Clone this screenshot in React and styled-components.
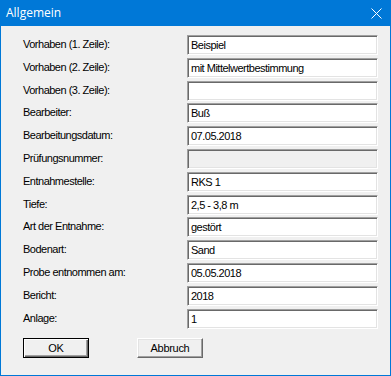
import React from 'react';
import styled, { createGlobalStyle } from 'styled-components';

const GlobalStyle = createGlobalStyle`
  html, body {
    margin: 0;
    padding: 0;
    background: #ffffff;
  }
`;

const uiFont = `'Liberation Sans', Arial, sans-serif`;

const StyledWindow = styled.div`
  width: 391px;
  height: 376px;
  box-sizing: border-box;
  border: 1px solid #0078d7;
  border-top: none;
  background: #f0f0f0;
  display: flex;
  flex-direction: column;
  font-family: ${uiFont};
  font-size: 11px;
  letter-spacing: -0.5px;
  color: #000;
`;

const StyledTitleBar = styled.div`
  height: 26px;
  margin: 0 -1px;
  background: #0078d7;
  display: flex;
  align-items: center;
  justify-content: space-between;
  padding: 0 9px 0 6px;
  flex-shrink: 0;
`;

const StyledTitle = styled.span`
  color: #ffffff;
  font-family: 'Open Sans', 'Noto Sans', sans-serif;
  font-size: 12px;
  letter-spacing: 0;
  margin-top: -1px;
`;

const StyledClose = styled.svg`
  width: 11px;
  height: 11px;
  display: block;
`;

const StyledBody = styled.div`
  padding: 9px 11px 0 21px;
  display: flex;
  flex-direction: column;
`;

const StyledForm = styled.div`
  display: grid;
  grid-template-columns: 165px 191px;
  grid-auto-rows: 20px;
  row-gap: 2.8px;
  align-items: center;
`;

const StyledLabel = styled.label`
  line-height: 20px;
  margin-top: -2px;
  padding-left: 1px;
  white-space: nowrap;
`;

const StyledInput = styled.div`
  height: 20px;
  box-sizing: border-box;
  border-top: 1px solid #a0a0a0;
  border-left: 1px solid #a0a0a0;
  border-right: 1px solid #ffffff;
  border-bottom: 1px solid #ffffff;
  box-shadow: inset 1px 1px 0 #696969, inset -1px -1px 0 #e3e3e3;
  background: ${({ $disabled }) => ($disabled ? '#f0f0f0' : '#ffffff')};
  padding: 0 3px;
  line-height: 18px;
  white-space: nowrap;
  overflow: hidden;
`;

const StyledButtons = styled.div`
  display: flex;
  gap: 48px;
  margin-top: 9px;
  padding-left: 1px;
`;

const StyledButton = styled.button`
  width: 66px;
  height: 20px;
  box-sizing: border-box;
  padding: 0;
  background: #f0f0f0;
  font-family: ${uiFont};
  font-size: 11px;
  letter-spacing: -0.3px;
  color: #000;
  border: 1px solid;
  border-color: ${({ $primary }) =>
    $primary ? '#000000' : '#ffffff #696969 #696969 #ffffff'};
  box-shadow: ${({ $primary }) =>
    $primary
      ? 'inset 1px 1px 0 #ffffff, inset -1px -1px 0 #696969, inset -2px -2px 0 #a0a0a0'
      : 'inset -1px -1px 0 #a0a0a0, inset 1px 1px 0 #e3e3e3'};
`;

const fields = [
  ['Vorhaben (1. Zeile):', 'Beispiel'],
  ['Vorhaben (2. Zeile):', 'mit Mittelwertbestimmung'],
  ['Vorhaben (3. Zeile):', ''],
  ['Bearbeiter:', 'Buß'],
  ['Bearbeitungsdatum:', '07.05.2018'],
  ['Prüfungsnummer:', '', true],
  ['Entnahmestelle:', 'RKS 1'],
  ['Tiefe:', '2,5 - 3,8 m'],
  ['Art der Entnahme:', 'gestört'],
  ['Bodenart:', 'Sand'],
  ['Probe entnommen am:', '05.05.2018'],
  ['Bericht:', '2018'],
  ['Anlage:', '1'],
];

const App = () => (
  <>
    <GlobalStyle />
    <StyledWindow>
      <StyledTitleBar>
        <StyledTitle>Allgemein</StyledTitle>
        <StyledClose viewBox="0 0 11 11">
          <path d="M0.5 0.5 L10.5 10.5 M10.5 0.5 L0.5 10.5" stroke="#ffffff" strokeWidth="1" />
        </StyledClose>
      </StyledTitleBar>
      <StyledBody>
        <StyledForm>
          {fields.map(([label, value, disabled]) => (
            <React.Fragment key={label}>
              <StyledLabel>{label}</StyledLabel>
              <StyledInput $disabled={disabled}>{value}</StyledInput>
            </React.Fragment>
          ))}
        </StyledForm>
        <StyledButtons>
          <StyledButton $primary>OK</StyledButton>
          <StyledButton>Abbruch</StyledButton>
        </StyledButtons>
      </StyledBody>
    </StyledWindow>
  </>
);

export default App;
